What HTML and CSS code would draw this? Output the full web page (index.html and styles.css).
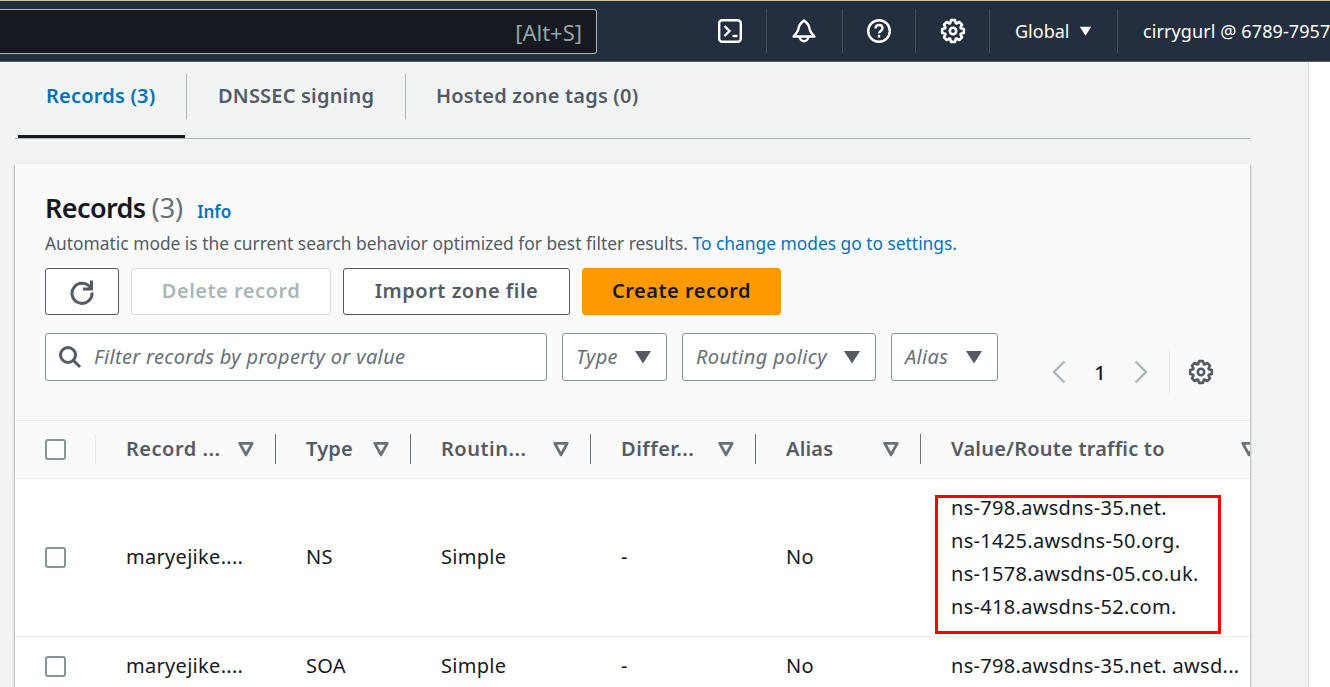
FILE: index.html
```html
<!DOCTYPE html>
<html lang="en">
<head>
    <meta charset="UTF-8">
    <meta name="viewport" content="width=device-width, initial-scale=1.0">
    <title>Hosted zone records</title>
    <link rel="stylesheet" href="styles.css">
</head>
<body>
    <svg class="icon-defs" width="0" height="0" aria-hidden="true">
        <symbol id="gear" viewBox="-1 -1 26 26">
            <polygon points="10.09,1.17 13.91,1.17 14.84,4.2 15.51,4.48 18.31,2.99 21.01,5.69 19.52,8.49 19.8,9.16 22.83,10.09 22.83,13.91 19.8,14.84 19.52,15.51 21.01,18.31 18.31,21.01 15.51,19.52 14.84,19.8 13.91,22.83 10.09,22.83 9.16,19.8 8.49,19.52 5.69,21.01 2.99,18.31 4.48,15.51 4.2,14.84 1.17,13.91 1.17,10.09 4.2,9.16 4.48,8.49 2.99,5.69 5.69,2.99 8.49,4.48 9.16,4.2" fill="none" stroke="currentColor" stroke-width="2.6" stroke-linejoin="round"/>
            <circle cx="12" cy="12" r="3.2" fill="none" stroke="currentColor" stroke-width="2.6"/>
        </symbol>
        <symbol id="sort" viewBox="0 0 14 14">
            <path d="M1.5 2h11L7 12z" fill="none" stroke="currentColor" stroke-width="2.4" stroke-linejoin="round"/>
        </symbol>
        <symbol id="caret" viewBox="0 0 18 14">
            <path d="M1 1h16L9 13.5z" fill="currentColor"/>
        </symbol>
    </svg>

    <!-- Top navigation -->
    <header class="topnav">
        <div class="search-box"><span>[Alt+S]</span></div>
        <div class="nav-items">
            <div class="nav-item nav-terminal">
                <svg width="24" height="24" viewBox="0 0 24 24"><rect x="1.2" y="1.2" width="21.6" height="21.6" rx="3" fill="none" stroke="currentColor" stroke-width="2.4"/><path d="M6.5 7l5 5-5 5" fill="none" stroke="currentColor" stroke-width="2.4"/><path d="M14.5 17h5" stroke="currentColor" stroke-width="2.4"/></svg>
            </div>
            <div class="nav-item nav-bell">
                <svg width="24" height="24" viewBox="0 0 24 24"><path d="M12 1.5C8.500 4 7 6 6.500 9.500 6 13 4 15 1.500 17.500h21C20 15 18 13 17.500 9.500 17 6 15.500 4 12 1.500z" fill="none" stroke="currentColor" stroke-width="2.4" stroke-linejoin="round"/><path d="M7.800 18a4.200 4.200 0 0 0 8.400 0" fill="none" stroke="currentColor" stroke-width="2.4"/></svg>
            </div>
            <div class="nav-item nav-help">
                <svg width="24" height="24" viewBox="0 0 24 24"><circle cx="12" cy="12" r="10.8" fill="none" stroke="currentColor" stroke-width="2.4"/><path d="M8.500 9.500c0-2.200 1.600-3.500 3.500-3.500s3.500 1.300 3.500 3.300c0 2.700-3.500 2.700-3.500 5.200" fill="none" stroke="currentColor" stroke-width="2.3"/><path d="M12 16v2.500" stroke="currentColor" stroke-width="2.4"/></svg>
            </div>
            <div class="nav-item nav-gear">
                <svg width="26" height="26"><use href="#gear"/></svg>
            </div>
            <div class="nav-item nav-region">
                <span>Global</span>
                <svg width="13" height="10"><use href="#caret"/></svg>
            </div>
            <div class="nav-item nav-user">cirrygurl @ 6789-7957</div>
        </div>
    </header>

    <div class="page">
        <main class="content">
            <!-- Tabs -->
            <nav class="tabs">
                <div class="tab tab-active">Records (3)</div>
                <div class="tab tab-dns">DNSSEC signing</div>
                <div class="tab tab-tags">Hosted zone tags (0)</div>
            </nav>

            <!-- Records card -->
            <section class="card">
                <div class="card-top">
                    <h2 class="card-title"><span class="title-text">Records</span> <span class="count">(3)</span> <a class="info">Info</a></h2>
                    <p class="card-desc">Automatic mode is the current search behavior optimized for best filter results. <a class="link">To change modes go to settings.</a></p>

                    <div class="actions">
                        <button class="btn btn-icon" type="button">
                            <svg width="26" height="26" viewBox="0 0 26 26"><path d="M21.500 9A10 10 0 1 0 23 13.500" fill="none" stroke="currentColor" stroke-width="3"/><path d="M22.500 1.500v8.500h-8.500" fill="none" stroke="currentColor" stroke-width="3"/></svg>
                        </button>
                        <button class="btn btn-delete" type="button" disabled>Delete record</button>
                        <button class="btn btn-import" type="button">Import zone file</button>
                        <button class="btn btn-create" type="button">Create record</button>
                    </div>

                    <div class="filters">
                        <div class="filter-input">
                            <svg width="24" height="24" viewBox="0 0 24 24"><circle cx="10" cy="10" r="7.5" fill="none" stroke="currentColor" stroke-width="3"/><path d="M15.500 15.500l6.500 6.500" stroke="currentColor" stroke-width="3"/></svg>
                            <span>Filter records by property or value</span>
                        </div>
                        <div class="select select-type"><span>Type</span><svg width="18" height="14"><use href="#caret"/></svg></div>
                        <div class="select select-routing"><span>Routing policy</span><svg width="18" height="14"><use href="#caret"/></svg></div>
                        <div class="select select-alias"><span>Alias</span><svg width="18" height="14"><use href="#caret"/></svg></div>
                        <div class="pager">
                            <svg class="pager-arrow" width="16" height="24" viewBox="0 0 16 24"><path d="M13.500 1.500L3 12l10.500 10.500" fill="none" stroke="currentColor" stroke-width="2.4"/></svg>
                            <span class="pager-num">1</span>
                            <svg class="pager-arrow" width="16" height="24" viewBox="0 0 16 24"><path d="M2.500 1.500L13 12 2.500 22.500" fill="none" stroke="currentColor" stroke-width="2.4"/></svg>
                            <div class="pager-gear"><svg width="26" height="26"><use href="#gear"/></svg></div>
                        </div>
                    </div>
                </div>

                <table class="records">
                    <colgroup>
                        <col class="col-check"><col class="col-name"><col class="col-type">
                        <col class="col-routing"><col class="col-diff"><col class="col-alias"><col class="col-value">
                    </colgroup>
                    <thead>
                        <tr>
                            <th><span class="checkbox"></span></th>
                            <th><div class="th-in th-first"><span class="th-trunc">Record ...</span><svg width="16" height="16"><use href="#sort"/></svg></div></th>
                            <th><div class="th-in"><span>Type</span><svg width="16" height="16"><use href="#sort"/></svg></div></th>
                            <th><div class="th-in"><span class="th-trunc">Routin...</span><svg width="16" height="16"><use href="#sort"/></svg></div></th>
                            <th><div class="th-in"><span class="th-trunc">Differ...</span><svg width="16" height="16"><use href="#sort"/></svg></div></th>
                            <th><div class="th-in"><span>Alias</span><svg width="16" height="16"><use href="#sort"/></svg></div></th>
                            <th><div class="th-in th-last"><span>Value/Route traffic to</span><svg width="16" height="16"><use href="#sort"/></svg></div></th>
                        </tr>
                    </thead>
                    <tbody>
                        <tr class="row-ns">
                            <td><span class="checkbox"></span></td>
                            <td>maryejike....</td>
                            <td>NS</td>
                            <td>Simple</td>
                            <td>-</td>
                            <td>No</td>
                            <td class="value-cell">
                                <div class="highlight"></div>
                                <div>ns-798.awsdns-35.net.</div>
                                <div>ns-1425.awsdns-50.org.</div>
                                <div>ns-1578.awsdns-05.co.uk.</div>
                                <div>ns-418.awsdns-52.com.</div>
                            </td>
                        </tr>
                        <tr class="row-soa">
                            <td><span class="checkbox"></span></td>
                            <td>maryejike....</td>
                            <td>SOA</td>
                            <td>Simple</td>
                            <td>-</td>
                            <td>No</td>
                            <td>ns-798.awsdns-35.net. awsd...</td>
                        </tr>
                    </tbody>
                </table>
            </section>
        </main>
        <aside class="side"></aside>
    </div>
</body>
</html>
```

FILE: styles.css
```css
* {
    box-sizing: border-box;
}

html, body {
    height: 687px;
    overflow: hidden;
}

body {
    margin: 0;
    font-family: "Noto Sans", Arial, sans-serif;
    background-color: #f2f3f3;
    color: #16191f;
}

.icon-defs {
    position: absolute;
}

/* top nav */
.topnav {
    display: flex;
    height: 62px;
    padding-top: 8px;
    background-color: #232f3e;
    border-top: 1px solid #c9bfa4;
    border-bottom: 1px solid #545b64;
    color: #fff;
}

.search-box {
    display: flex;
    align-items: center;
    justify-content: flex-end;
    flex: 0 0 597px;
    height: 45px;
    padding-right: 14px;
    background-color: #16191f;
    border: 1px solid #aab7b8;
    border-left: none;
    border-radius: 0 3px 3px 0;
    color: #95a5a6;
    font-size: 22px;
}

.nav-items {
    display: flex;
    align-items: center;
    height: 44px;
    white-space: nowrap;
}

.nav-item {
    display: flex;
    align-items: center;
    height: 44px;
    border-left: 1px solid #414d5c;
    font-size: 18px;
}

.nav-terminal {
    width: 169px;
    padding-left: 121px;
    border-left: none;
}

.nav-bell {
    width: 76px;
    padding-left: 25px;
}

.nav-help {
    width: 73px;
    padding-left: 24px;
}

.nav-gear {
    width: 74px;
    padding-left: 24px;
}

.nav-region {
    width: 128px;
    padding-left: 25px;
    gap: 10px;
}

.nav-user {
    padding-left: 25px;
    letter-spacing: 0.1px;
}

/* page */
.page {
    display: flex;
    height: 625px;
}

.content {
    flex: 0 0 1308px;
    padding-left: 15px;
}

.side {
    flex: 1;
    background-color: #fff;
    border-left: 1px solid #d5dbdb;
}

/* tabs */
.tabs {
    display: flex;
    width: 1235px;
    height: 77px;
    padding-top: 12px;
    border-bottom: 1px solid #aab7b8;
    font-size: 20px;
    font-weight: 600;
    letter-spacing: 0.2px;
    color: #545b64;
}

.tab {
    height: 45px;
    line-height: 44px;
}

.tab-active {
    position: relative;
    width: 171px;
    padding-left: 31px;
    color: #0073bb;
}

.tab-active::after {
    content: "";
    position: absolute;
    left: 3px;
    right: 1px;
    top: 61px;
    height: 3px;
    background-color: #16191f;
}

.tab-dns {
    width: 219px;
    padding-left: 31px;
    border-left: 1px solid #aab7b8;
}

.tab-tags {
    padding-left: 30px;
    border-left: 1px solid #aab7b8;
}

/* card */
.card {
    width: 1235px;
    height: 523px;
    margin-top: 25px;
    background-color: #fff;
    box-shadow: 0 1px 2px rgba(0, 28, 36, 0.3), 1px 1px 2px rgba(0, 28, 36, 0.15), -1px 1px 2px rgba(0, 28, 36, 0.15);
    overflow: hidden;
}

.card-top {
    height: 256px;
    padding: 26px 30px 0;
    background-color: #fafafa;
}

.card-title {
    display: flex;
    align-items: baseline;
    gap: 6px;
    margin: 0;
    height: 36px;
    font-size: 27px;
    line-height: 36px;
    font-weight: 600;
}

.title-text {
    letter-spacing: -0.6px;
}

.count {
    color: #687078;
    font-weight: 400;
}

.info {
    margin-left: 8px;
    color: #0073bb;
    font-size: 17px;
    font-weight: 600;
}

.card-desc {
    margin: 4px 0 0;
    height: 26px;
    font-size: 17.36px;
    line-height: 26px;
    color: #545b64;
    white-space: nowrap;
}

.link {
    color: #0073bb;
}

.actions {
    display: flex;
    gap: 12px;
    margin-top: 12px;
}

.btn {
    height: 47px;
    padding: 0 0 2px;
    background-color: #fff;
    border: 1px solid #545b64;
    border-radius: 3px;
    font-family: inherit;
    font-size: 20px;
    font-weight: 600;
    letter-spacing: 0.5px;
    color: #545b64;
}

.btn-icon {
    display: flex;
    align-items: center;
    justify-content: center;
    width: 74px;
    padding: 0;
}

.btn-delete {
    width: 200px;
    border-color: #d5dbdb;
    color: #aab7b8;
}

.btn-import {
    width: 227px;
}

.btn-create {
    width: 199px;
    background-color: #ff9900;
    border-color: #ff9900;
    color: #16191f;
}

.filters {
    display: flex;
    gap: 15px;
    margin-top: 18px;
    height: 48px;
}

.filter-input, .select {
    display: flex;
    align-items: center;
    height: 48px;
    background-color: #fff;
    border: 1px solid #879596;
    border-radius: 3px;
    font-size: 20px;
    font-style: italic;
    letter-spacing: 0.35px;
    color: #687078;
}

.filter-input span, .select span {
    margin-bottom: 2px;
}

.filter-input {
    width: 502px;
    padding-left: 12px;
    gap: 12px;
}

.filter-input svg {
    color: #545b64;
}

.select {
    justify-content: space-between;
    padding: 0 14px 0 13px;
}

.select svg {
    color: #545b64;
}

.select-type {
    width: 105px;
}

.select-routing {
    width: 194px;
}

.select-alias {
    width: 107px;
}

.pager {
    display: flex;
    align-items: center;
    height: 46px;
    margin: 16px 0 0 38px;
}

.pager-arrow {
    color: #aab7b8;
}

.pager-num {
    width: 66px;
    text-align: center;
    font-size: 20px;
    font-weight: 500;
}

.pager-gear {
    display: flex;
    align-items: center;
    height: 46px;
    margin-left: 20px;
    padding-left: 18px;
    border-left: 1px solid #eaeded;
    color: #545b64;
}

/* table */
.records {
    width: 1235px;
    border-collapse: collapse;
    table-layout: fixed;
    font-size: 20px;
}

.col-check { width: 80px; }
.col-name { width: 180px; }
.col-type { width: 135px; }
.col-routing { width: 180px; }
.col-diff { width: 165px; }
.col-alias { width: 165px; }
.col-value { width: 330px; }

.records th {
    height: 58px;
    padding: 0 0 2px;
    background-color: #fafafa;
    border-top: 1px solid #eaeded;
    border-bottom: 1px solid #eaeded;
    text-align: left;
    font-weight: 600;
    letter-spacing: 0.2px;
    color: #545b64;
}

.th-in {
    display: flex;
    align-items: center;
    justify-content: space-between;
    height: 30px;
    padding: 0 21px 0 30px;
    border-left: 1px solid #687078;
    white-space: nowrap;
}

.th-trunc {
    letter-spacing: 0.5px;
}

.th-in svg {
    flex: none;
    color: #687078;
}

.th-first {
    border-left-color: #eaeded;
}

.th-last {
    padding-right: 0;
    margin-right: -7px;
}

.records td {
    padding: 0 0 2px 31px;
    border-bottom: 1px solid #eaeded;
    color: #16191f;
    letter-spacing: 0.3px;
    white-space: nowrap;
    overflow: hidden;
}

.records th:first-child, .records td:first-child {
    padding: 0 0 0 30px;
}

.row-ns td {
    height: 158px;
}

.row-soa td {
    height: 60px;
}

.records .value-cell {
    position: relative;
    line-height: 33px;
    overflow: visible;
}

.highlight {
    position: absolute;
    left: 15px;
    top: 16px;
    width: 286px;
    height: 139px;
    border: 3px solid #ff0000;
}

.checkbox {
    display: block;
    width: 21px;
    height: 21px;
    background-color: #fff;
    border: 2px solid #879596;
    border-radius: 3px;
}
```
